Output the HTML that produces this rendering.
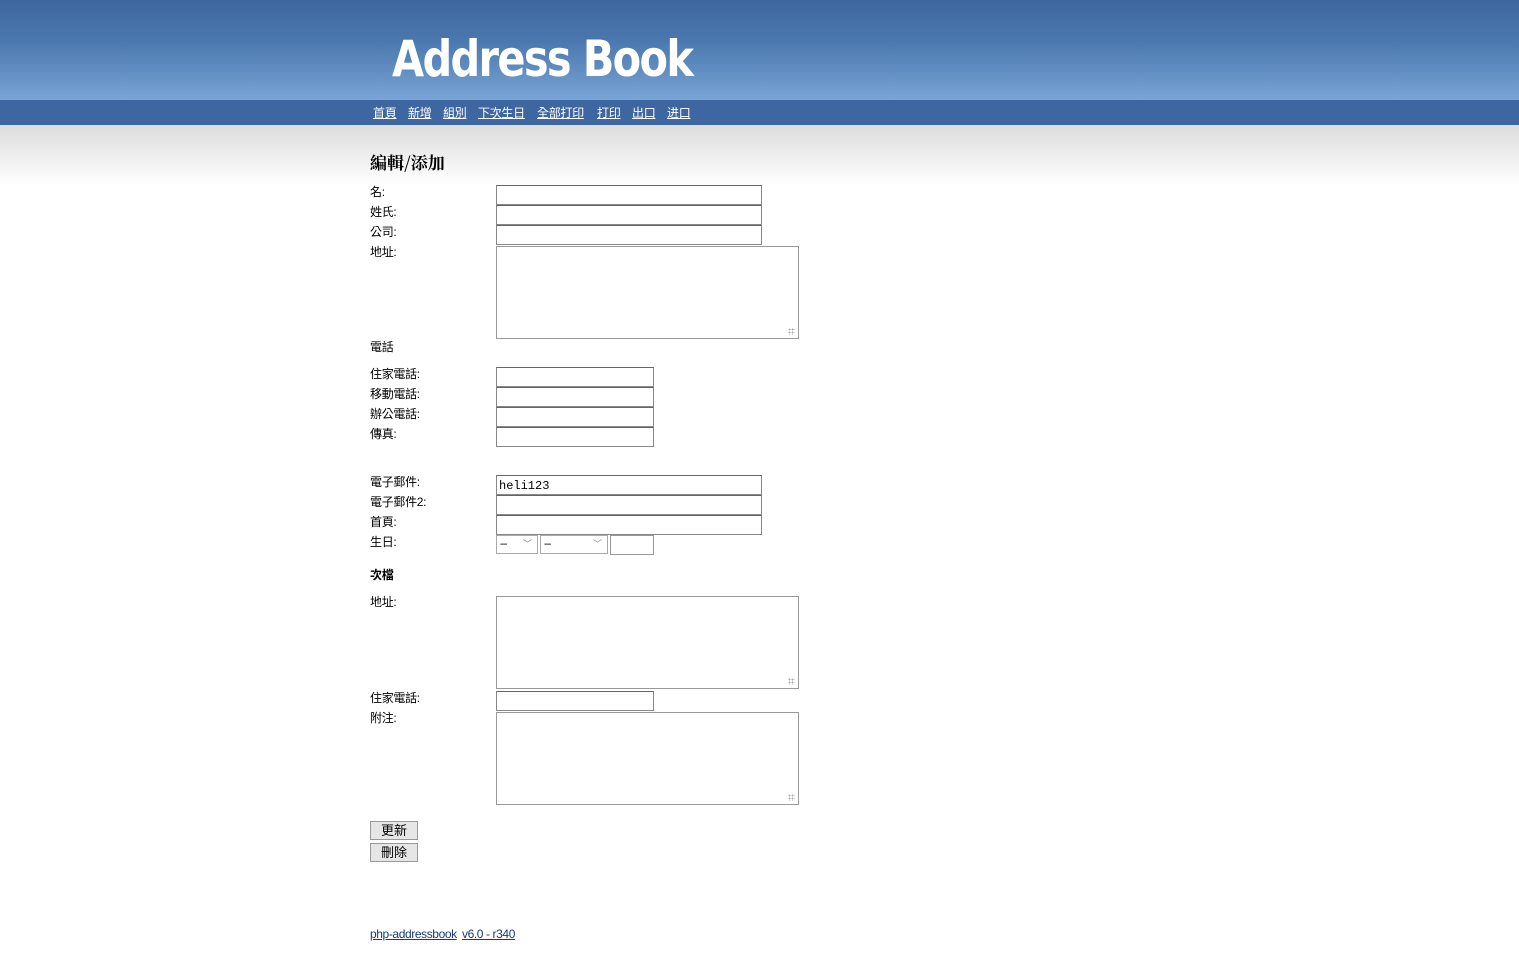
<!DOCTYPE html>
<html><head><meta charset="utf-8"><style>
body{margin:0;width:1519px;height:962px;position:relative;font-family:"Liberation Sans","Noto Sans CJK TC",sans-serif;font-size:12px;color:#000;background:#fff;overflow:hidden}
.hd{position:absolute;left:0;top:0;width:1519px;height:100px;background:linear-gradient(#3d679e,#4a77ad 40%,#78a4d6)}
.nav{position:absolute;left:0;top:100px;width:1519px;height:25px;background:#3e66a0}
.nav a{position:absolute;top:4px;color:#fff;font-size:12px;text-decoration:underline;letter-spacing:-0.3px}
.gr{position:absolute;left:0;top:125px;width:1519px;height:60px;background:linear-gradient(#dcdcdc,#fff)}
.logo{position:absolute;left:392px;top:30px;color:#fff;font:bold 50px "DejaVu Sans",sans-serif;letter-spacing:-2px;transform:scaleX(0.83);transform-origin:left}
.l{position:absolute;left:370px;font-size:12px;margin-top:-2px;letter-spacing:-0.3px}
.i{position:absolute;left:496px;width:264px;height:18px;border:1px solid #888;border-top-color:#666;background:#fff;box-sizing:content-box}
.s{width:156px}
.t{position:absolute;left:496px;width:301px;height:91px;border:1px solid #999;background:#fff}
.t:after{content:"";position:absolute;right:3px;bottom:3px;width:7px;height:7px;background:radial-gradient(#aaa 40%,transparent 50%) 0 0/3px 3px}
h2{position:absolute;left:370px;top:149px;margin:0;font:bold 17px "Noto Serif CJK SC",serif}
.b{position:absolute;left:370px;width:46px;height:17px;border:1px solid #999;background:#e6e6e6;font-size:13px;text-align:center;line-height:17px}
.sel{position:absolute;top:535px;height:17px;border:1px solid #aaa;background:#fff;font-size:12px}
.sel span{position:absolute;right:5px;top:1px;color:#888;font-size:9px}
.f{position:absolute;top:927px;color:#1a3a78;text-decoration:underline;letter-spacing:-0.4px}
</style></head><body>
<div class="hd"><div class="logo">Address Book</div></div>
<div class="nav">
<a style="left:373px">首頁</a><a style="left:408px">新增</a><a style="left:443px">組別</a><a style="left:478px">下次生日</a><a style="left:537px">全部打印</a><a style="left:597px">打印</a><a style="left:632px">出口</a><a style="left:667px">进口</a>
</div>
<div class="gr"></div>
<h2>編輯/添加</h2>
<div class="l" style="top:185px">名:</div><div class="i" style="top:185px"></div>
<div class="l" style="top:205px">姓氏:</div><div class="i" style="top:205px"></div>
<div class="l" style="top:225px">公司:</div><div class="i" style="top:225px"></div>
<div class="l" style="top:245px">地址:</div><div class="t" style="top:246px"></div>
<div class="l" style="top:340px">電話</div>
<div class="l" style="top:367px">住家電話:</div><div class="i s" style="top:367px"></div>
<div class="l" style="top:387px">移動電話:</div><div class="i s" style="top:387px"></div>
<div class="l" style="top:407px">辦公電話:</div><div class="i s" style="top:407px"></div>
<div class="l" style="top:427px">傳真:</div><div class="i s" style="top:427px"></div>
<div class="l" style="top:475px">電子郵件:</div><div class="i" style="top:475px"><span style="font:12px 'Liberation Mono',monospace;position:absolute;left:2px;top:3px">heli123</span></div>
<div class="l" style="top:495px">電子郵件2:</div><div class="i" style="top:495px"></div>
<div class="l" style="top:515px">首頁:</div><div class="i" style="top:515px"></div>
<div class="l" style="top:535px">生日:</div>
<div class="sel" style="left:496px;width:40px">&nbsp;–<span>﹀</span></div>
<div class="sel" style="left:540px;width:66px">&nbsp;–<span>﹀</span></div>
<div class="sel" style="left:610px;width:42px;height:18px;border-color:#999"></div>
<div class="l" style="top:568px;font-weight:bold">次檔</div>
<div class="l" style="top:595px">地址:</div><div class="t" style="top:596px"></div>
<div class="l" style="top:691px">住家電話:</div><div class="i s" style="top:691px"></div>
<div class="l" style="top:711px">附注:</div><div class="t" style="top:712px"></div>
<div class="b" style="top:821px">更新</div>
<div class="b" style="top:843px">刪除</div>
<div class="f" style="left:370px">php-addressbook</div>
<div class="f" style="left:462px">v6.0 - r340</div>
</body></html>
